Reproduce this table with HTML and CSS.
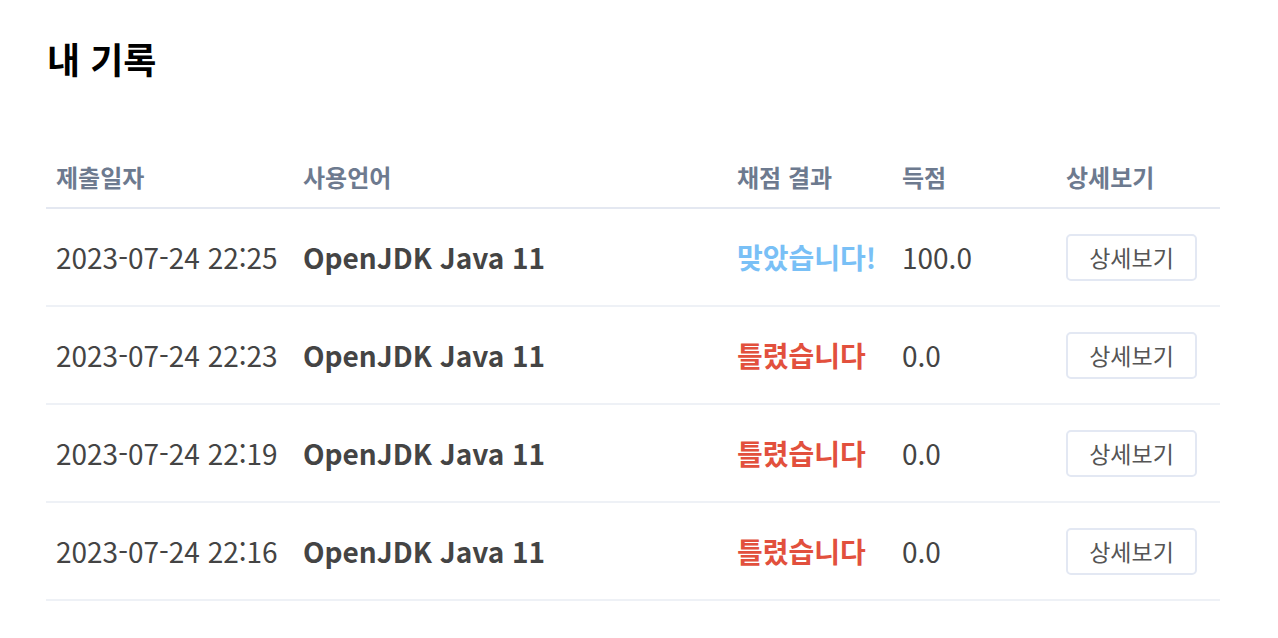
FILE: index.html
```html
<!DOCTYPE html>
<html lang="ko">
<head>
<meta charset="utf-8">
<link rel="stylesheet" href="styles.css">
</head>
<body>
<main class="page">
  <h1 class="title">내 기록</h1>
  <table class="records">
    <thead>
      <tr>
        <th class="c-date">제출일자</th>
        <th class="c-lang">사용언어</th>
        <th class="c-result">채점 결과</th>
        <th class="c-score">득점</th>
        <th class="c-detail">상세보기</th>
      </tr>
    </thead>
    <tbody>
      <tr>
        <td class="date">2023-07-24 22:25</td>
        <td class="lang">OpenJDK Java 11</td>
        <td class="result ok">맞았습니다!</td>
        <td class="score">100.0</td>
        <td><button class="detail-btn">상세보기</button></td>
      </tr>
      <tr>
        <td class="date">2023-07-24 22:23</td>
        <td class="lang">OpenJDK Java 11</td>
        <td class="result fail">틀렸습니다</td>
        <td class="score">0.0</td>
        <td><button class="detail-btn">상세보기</button></td>
      </tr>
      <tr>
        <td class="date">2023-07-24 22:19</td>
        <td class="lang">OpenJDK Java 11</td>
        <td class="result fail">틀렸습니다</td>
        <td class="score">0.0</td>
        <td><button class="detail-btn">상세보기</button></td>
      </tr>
      <tr>
        <td class="date">2023-07-24 22:16</td>
        <td class="lang">OpenJDK Java 11</td>
        <td class="result fail">틀렸습니다</td>
        <td class="score">0.0</td>
        <td><button class="detail-btn">상세보기</button></td>
      </tr>
    </tbody>
  </table>
</main>
</body>
</html>
```
FILE: styles.css
```css
* { box-sizing: border-box; }
html, body { margin: 0; padding: 0; background: #fff; }
body {
  font-family: "Noto Sans CJK KR", "Noto Sans", sans-serif;
  color: #333;
}
.page {
  padding: 34px 58px 0 46px;
}
.title {
  margin: 0 0 0 1px;
  font-size: 36px;
  line-height: 48px;
  font-weight: 700;
  color: #000;
}
.records {
  width: 1174px;
  margin-top: 68px;
  border-collapse: collapse;
  table-layout: fixed;
}
.records th {
  text-align: left;
  font-size: 24px;
  font-weight: 700;
  color: #6d7a8f;
  padding: 0 10px;
  height: 58px;
  vertical-align: top;
  line-height: 30px;
  padding-top: 12px;
  border-bottom: 2px solid #e4e8f1;
}
.c-date { width: 247px; }
.c-lang { width: 434px; }
.c-result { width: 165px; }
.c-score { width: 164px; }
.c-detail { width: 164px; }
.records td {
  height: 98px;
  padding: 0 10px;
  border-bottom: 2px solid #eef1f6;
  vertical-align: middle;
  font-size: 28px;
}
.date { color: #444; font-weight: 400; }
.lang { color: #444; font-weight: 700; }
.result { font-weight: 700; }
.result.ok { color: #79c0f6; }
.result.fail { color: #e2503d; }
.score { color: #444; }
.detail-btn {
  font-family: inherit;
  font-size: 23px;
  color: #555;
  background: #fff;
  border: 2px solid #e3e8f3;
  border-radius: 5px;
  width: 131px;
  height: 47px;
  padding: 0;
  cursor: pointer;
}
```
